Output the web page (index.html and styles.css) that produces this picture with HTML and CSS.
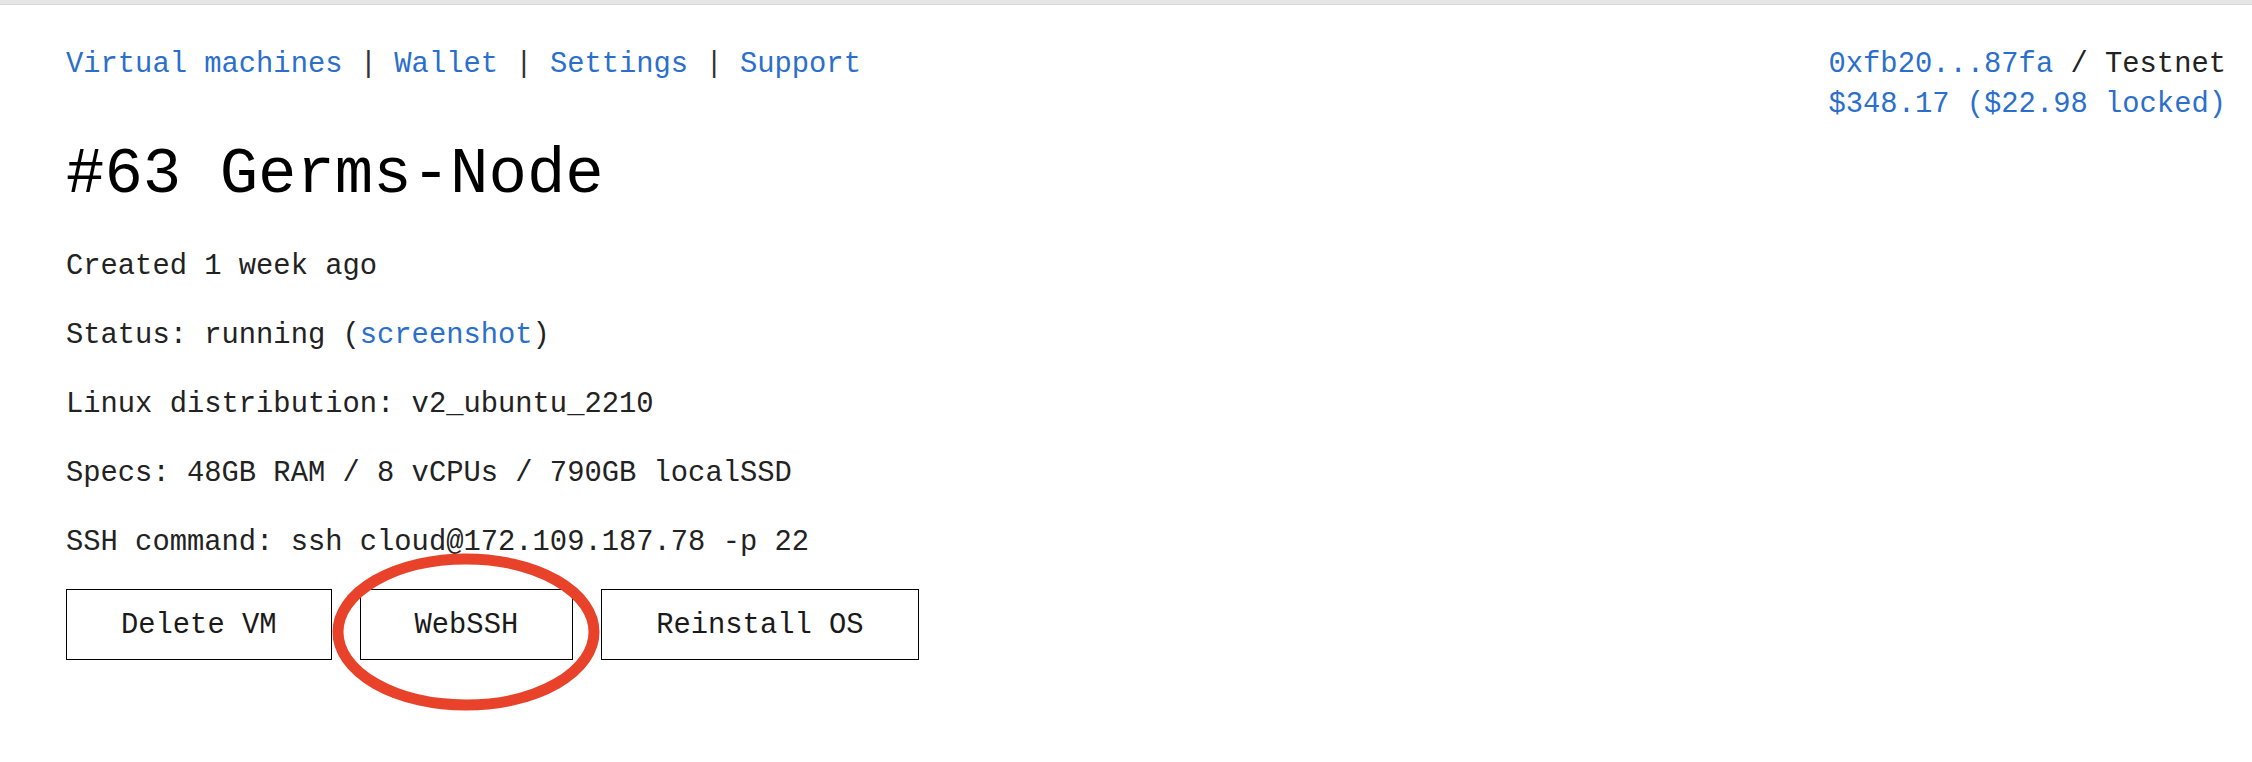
FILE: index.html
```html
<!DOCTYPE html>
<html lang="en">
<head>
<meta charset="utf-8">
<title>#63 Germs-Node</title>
<link rel="stylesheet" href="styles.css">
</head>
<body>
<div class="chrome-line"></div>
<div class="page">
  <header class="topbar">
    <nav class="nav"><a href="#">Virtual machines</a> <span class="sep">|</span> <a href="#">Wallet</a> <span class="sep">|</span> <a href="#">Settings</a> <span class="sep">|</span> <a href="#">Support</a></nav>
    <div class="account">
      <div><a href="#">0xfb20...87fa</a> / Testnet</div>
      <div><a href="#">$348.17 ($22.98 locked)</a></div>
    </div>
  </header>

  <h1 class="title">#63 Germs-Node</h1>

  <section class="info">
    <p>Created 1 week ago</p>
    <p>Status: running (<a href="#">screenshot</a>)</p>
    <p>Linux distribution: v2_ubuntu_2210</p>
    <p>Specs: 48GB RAM / 8 vCPUs / 790GB localSSD</p>
    <p>SSH command: ssh cloud@172.109.187.78 -p 22</p>
  </section>

  <div class="actions">
    <button class="btn">Delete VM</button>
    <button class="btn">WebSSH</button>
    <button class="btn">Reinstall OS</button>
    <svg class="annotation" width="268" height="158" viewBox="0 0 268 158" aria-hidden="true">
      <ellipse cx="134" cy="79" rx="128" ry="73" fill="none" stroke="#e8432a" stroke-width="11"/>
    </svg>
  </div>
</div>
</body>
</html>
```

FILE: styles.css
```css
html, body {
  margin: 0;
  padding: 0;
  background: #ffffff;
}

body {
  font-family: "Liberation Mono", "Courier New", monospace;
  font-size: 28.8px;
  line-height: 40.3px;
  color: #222222;
  min-height: 762px;
}

a {
  color: #2b6fcc;
  text-decoration: none;
}

.chrome-line {
  height: 4px;
  background: #e6e6e6;
  border-bottom: 1px solid #d6d6d6;
}

.page {
  padding: 40px 26px 80px 66px;
}

.topbar {
  display: flex;
  justify-content: space-between;
  align-items: flex-start;
}

.sep {
  color: #333333;
}

.account {
  text-align: right;
  color: #222222;
}

.title {
  font-family: "Liberation Mono", "Courier New", monospace;
  font-size: 64px;
  line-height: 72px;
  font-weight: normal;
  color: #000000;
  margin: 13px 0 0 0;
}

.info {
  display: flex;
  flex-direction: column;
  gap: 28.8px;
  margin-top: 36px;
}

.info p {
  margin: 0;
}

.actions {
  position: relative;
  display: flex;
  gap: 28px;
  margin-top: 26px;
}

.btn {
  font-family: "Liberation Mono", "Courier New", monospace;
  font-size: 28.8px;
  line-height: 40.3px;
  color: #1a1a1a;
  background: #ffffff;
  border: 1px solid #000000;
  border-radius: 0;
  padding: 16px 54px 12px 54px;
  margin: 0;
}

.annotation {
  position: absolute;
  left: 266px;
  top: -36px;
  overflow: visible;
  pointer-events: none;
}
```
